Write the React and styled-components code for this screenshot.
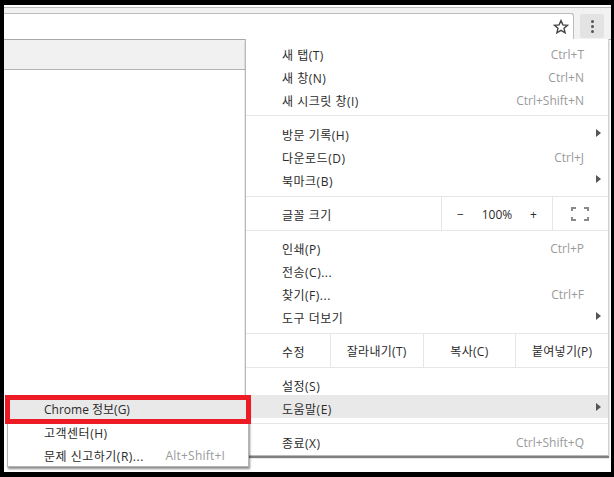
import styled, { createGlobalStyle } from "styled-components";

const GlobalStyle = createGlobalStyle`
  html, body {
    margin: 0;
    padding: 0;
    background: #000;
  }
  body {
    font-family: "Open Sans", "Noto Sans CJK KR", sans-serif;
    font-size: 12px;
    color: #2b2b2b;
  }
`;

function Row({ label, shortcut, arrow, active }) {
  return (
    <MenuRow $active={active}>
      <Label>{label}</Label>
      {shortcut && <Shortcut>{shortcut}</Shortcut>}
      {arrow && <Arrow />}
    </MenuRow>
  );
}

export default function App() {
  return (
    <>
      <GlobalStyle />
      <Frame>
        <Window>
          <TopStrip />
          <Toolbar>
            <AddressBox>
              <svg width="16" height="16" viewBox="0 0 16 16">
                <path
                  d="M8 1.6l1.9 4.3 4.6.4-3.5 3 1.1 4.6L8 11.4l-4.1 2.5L5 9.3l-3.5-3 4.6-.4z"
                  fill="none"
                  stroke="#444"
                  strokeWidth="1.4"
                />
              </svg>
            </AddressBox>
            <MoreButton>
              <Dot />
              <Dot />
              <Dot />
            </MoreButton>
          </Toolbar>
          <PageBody>
            <PageBar />
          </PageBody>

          <Menu>
            <Section $top={2} $bottom={5}>
              <Row label="새 탭(T)" shortcut="Ctrl+T" />
              <Row label="새 창(N)" shortcut="Ctrl+N" />
              <Row label="새 시크릿 창(I)" shortcut="Ctrl+Shift+N" />
            </Section>
            <Section $top={5} $bottom={6}>
              <Row label="방문 기록(H)" arrow />
              <Row label="다운로드(D)" shortcut="Ctrl+J" />
              <Row label="북마크(B)" arrow />
            </Section>
            <ZoomRow>
              <ZoomLabel>글꼴 크기</ZoomLabel>
              <ZoomControls>
                <span>−</span>
                <span>100%</span>
                <span>+</span>
              </ZoomControls>
              <FullscreenCell>
                <svg width="18" height="14" viewBox="0 0 18 14">
                  <path
                    d="M1 4V1h4M13 1h4v3M17 10v3h-4M5 13H1v-3"
                    fill="none"
                    stroke="#8a8a8a"
                    strokeWidth="2"
                  />
                </svg>
              </FullscreenCell>
            </ZoomRow>
            <Section $top={4} $bottom={6}>
              <Row label="인쇄(P)" shortcut="Ctrl+P" />
              <Row label="전송(C)..." />
              <Row label="찾기(F)..." shortcut="Ctrl+F" />
              <Row label="도구 더보기" arrow />
            </Section>
            <EditRow>
              <EditLabel>수정</EditLabel>
              <EditCell>잘라내기(T)</EditCell>
              <EditCell>복사(C)</EditCell>
              <EditCell>붙여넣기(P)</EditCell>
            </EditRow>
            <Section $top={4} $bottom={5}>
              <Row label="설정(S)" />
              <Row label="도움말(E)" arrow active />
            </Section>
            <Section $top={5} $bottom={3} $last>
              <Row label="종료(X)" shortcut="Ctrl+Shift+Q" />
            </Section>
          </Menu>

          <SubMenu>
            <SubRow $active>Chrome 정보(G)</SubRow>
            <SubRow>
              <Label>고객센터(H)</Label>
            </SubRow>
            <SubRow>
              <Label>문제 신고하기(R)...</Label>
              <SubShortcut>Alt+Shift+I</SubShortcut>
            </SubRow>
          </SubMenu>
          <Highlight />
        </Window>
      </Frame>
    </>
  );
}

const Frame = styled.div`
  width: 614px;
  height: 477px;
  padding: 5px 3px 5px 4px;
  box-sizing: border-box;
  background: #000;
  overflow: hidden;
`;
const Window = styled.div`
  position: relative;
  height: 100%;
  background: #fff;
  display: flex;
  flex-direction: column;
`;
const TopStrip = styled.div`
  height: 2px;
  border-bottom: 1px solid #bdbdbd;
  background: #fff;
`;
const Toolbar = styled.div`
  height: 31px;
  background: #f2f2f2;
  display: flex;
  align-items: flex-end;
  padding-right: 7px;
  border-bottom: 1px solid #a9a9a9;
`;
const AddressBox = styled.div`
  flex: 1;
  height: 26px;
  background: #fff;
  border: 1px solid #bcbcbc;
  border-bottom: 0;
  border-left: 0;
  border-top-right-radius: 3px;
  display: flex;
  align-items: center;
  justify-content: flex-end;
  padding-right: 4px;
  box-sizing: border-box;
`;
const MoreButton = styled.div`
  width: 24px;
  height: 24px;
  margin-left: 6px;
  margin-bottom: 1px;
  background: #e3e3e3;
  border-radius: 2px;
  display: flex;
  flex-direction: column;
  align-items: center;
  justify-content: center;
  gap: 2px;
`;
const Dot = styled.i`
  width: 3px;
  height: 3px;
  border-radius: 50%;
  background: #555;
`;
const PageBody = styled.div`
  flex: 1;
  width: 241px;
`;
const PageBar = styled.div`
  height: 29px;
  background: #f1f1f1;
  border-bottom: 1px solid #b4b4b4;
`;
const Menu = styled.div`
  position: absolute;
  left: 241px;
  top: 34px;
  width: 364px;
  box-sizing: border-box;
  background: #fff;
  border: 1px solid #bababa;
  border-top: 0;
  border-right-color: #d0d0d0;
  box-shadow: 0 2px 1px rgba(0, 0, 0, 0.5);
`;
const Section = styled.div`
  padding: ${(p) => p.$top}px 0 ${(p) => p.$bottom}px;
  border-bottom: ${(p) => (p.$last ? "0" : "1px solid #e6e6e6")};
`;
const MenuRow = styled.div`
  position: relative;
  height: 23px;
  box-sizing: border-box;
  display: flex;
  align-items: center;
  justify-content: space-between;
  padding: 4px 24px 0 36px;
  background: ${(p) => (p.$active ? "#e9e9e9" : "transparent")};
`;
const Label = styled.span`
  letter-spacing: 0.5px;
`;
const Shortcut = styled.span`
  color: #9a9a9a;
`;
const Arrow = styled.i`
  position: absolute;
  right: 7px;
  top: 8px;
  border-left: 5px solid #555;
  border-top: 4px solid transparent;
  border-bottom: 4px solid transparent;
`;
const ZoomRow = styled.div`
  height: 33px;
  display: flex;
  align-items: center;
  border-bottom: 1px solid #e6e6e6;
`;
const ZoomLabel = styled.div`
  width: 195px;
  padding: 2px 0 0 36px;
  box-sizing: border-box;
  letter-spacing: 0.5px;
`;
const ZoomControls = styled.div`
  width: 112px;
  height: 100%;
  box-sizing: border-box;
  border-left: 1px solid #e6e6e6;
  border-right: 1px solid #e6e6e6;
  display: flex;
  align-items: center;
  justify-content: space-between;
  padding: 2px 15px 0;
`;
const FullscreenCell = styled.div`
  flex: 1;
  display: flex;
  justify-content: center;
  padding-right: 2px;
`;
const EditRow = styled.div`
  height: 33px;
  display: flex;
  align-items: center;
  border-bottom: 1px solid #e6e6e6;
`;
const EditLabel = styled.div`
  width: 84px;
  padding: 2px 0 0 36px;
  box-sizing: border-box;
  letter-spacing: 0.5px;
`;
const EditCell = styled.div`
  width: 93px;
  height: 100%;
  box-sizing: border-box;
  border-left: 1px solid #e6e6e6;
  display: flex;
  align-items: center;
  justify-content: center;
  letter-spacing: 0.3px;
`;
const SubMenu = styled.div`
  position: absolute;
  left: 3px;
  top: 393px;
  width: 242px;
  height: 69px;
  box-sizing: border-box;
  background: #fff;
  border: 1px solid #b5b5b5;
  border-top: 0;
  box-shadow: 1px 2px 2px rgba(0, 0, 0, 0.45);
`;
const SubRow = styled.div`
  height: 23px;
  box-sizing: border-box;
  display: flex;
  align-items: center;
  justify-content: space-between;
  padding: 0 23px ${(p) => (p.$active ? "2px" : "0")} 36px;
  background: ${(p) => (p.$active ? "#e9e9e9" : "transparent")};
`;
const SubShortcut = styled.span`
  color: #9a9a9a;
  letter-spacing: 0.2px;
`;
const Highlight = styled.div`
  position: absolute;
  left: 1px;
  top: 390px;
  width: 246px;
  height: 29px;
  box-sizing: border-box;
  border: 5px solid #ed1c24;
`;
